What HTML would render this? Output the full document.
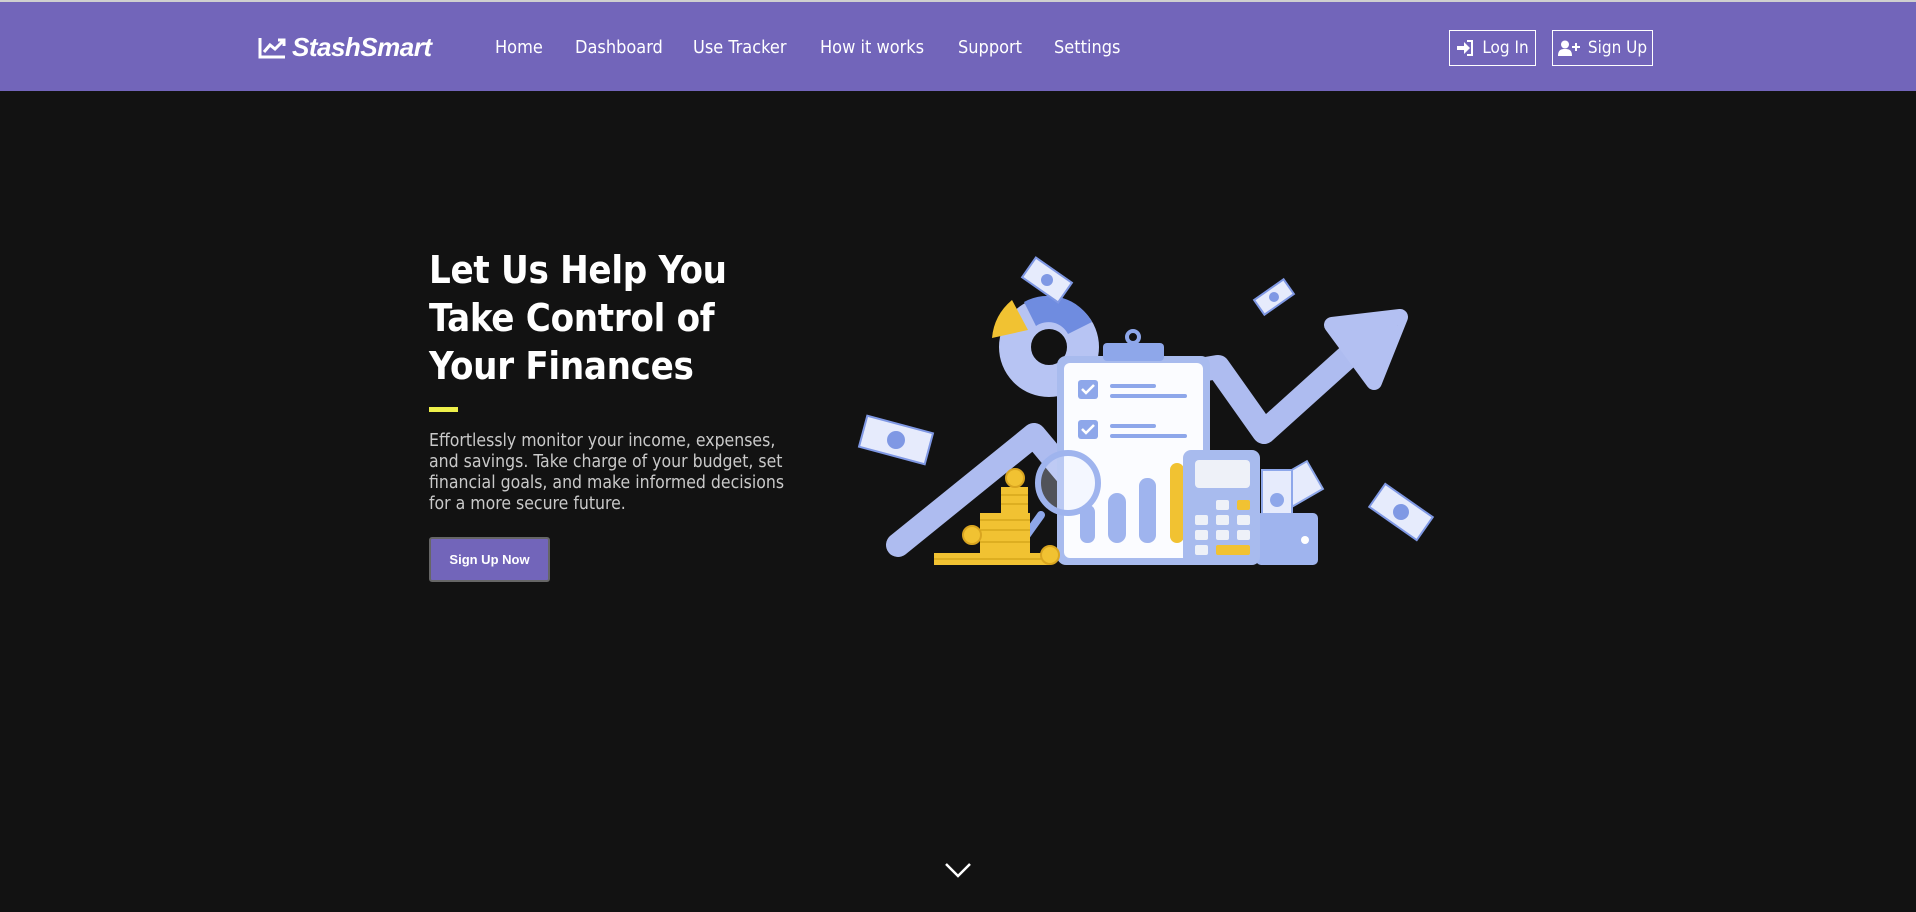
<!DOCTYPE html>
<html><head><meta charset="utf-8">
<style>
*{margin:0;padding:0;box-sizing:border-box}
body{width:1916px;height:912px;background:#121212;font-family:"DejaVu Sans Condensed","DejaVu Sans","Liberation Sans",sans-serif;overflow:hidden;position:relative;color:#fff}
.hdr{position:absolute;left:0;top:0;width:1916px;height:91px;background:#7265ba;border-top:2px solid #cfcfcf}
.logo{position:absolute;left:258px;top:30px;font:bold 26px "Liberation Sans",sans-serif;font-style:italic;letter-spacing:-0.5px;display:flex;align-items:center;gap:6px}
.nav{position:absolute;top:35px;font-size:18px;color:#fff}
.btn{position:absolute;top:28px;height:36px;border:1.5px solid #fff;font-size:17px;display:flex;align-items:center;justify-content:center;gap:8px}
h1{position:absolute;left:429px;top:246px;font-size:38px;line-height:48px;font-weight:bold;width:350px;letter-spacing:-0.3px}
.bar{position:absolute;left:429px;top:407px;width:29px;height:5px;background:#eef04a}
p{position:absolute;left:429px;top:431px;font-size:17.5px;line-height:21px;color:#c9c9c9;white-space:nowrap}
.cta{position:absolute;left:429px;top:537px;width:121px;height:45px;background:#7265ba;border:2px solid #666;border-radius:3px;font:bold 13px "Liberation Sans",sans-serif;display:flex;align-items:center;justify-content:center}
</style></head><body>
<div class="hdr">
<div class="logo"><svg width="28" height="24" viewBox="0 0 28 24"><path d="M2 2V21H27" stroke="#fff" stroke-width="3" fill="none"/><path d="M6 16L12 9L17 13L25 5" stroke="#fff" stroke-width="3" fill="none"/><path d="M20 4H26V10" stroke="#fff" stroke-width="3" fill="none"/></svg>StashSmart</div>
<span class="nav" style="left:495px">Home</span>
<span class="nav" style="left:575px">Dashboard</span>
<span class="nav" style="left:693px">Use Tracker</span>
<span class="nav" style="left:820px">How it works</span>
<span class="nav" style="left:958px">Support</span>
<span class="nav" style="left:1054px">Settings</span>
<div class="btn" style="left:1449px;width:87px"><svg width="18" height="16" viewBox="0 0 18 16"><path d="M1 6H8V2L14 8L8 14V10H1Z" fill="#fff"/><path d="M11 1H16V15H11" stroke="#fff" stroke-width="2" fill="none"/></svg>Log In</div>
<div class="btn" style="left:1552px;width:101px"><svg width="22" height="16" viewBox="0 0 22 16"><circle cx="7" cy="4.5" r="4" fill="#fff"/><path d="M0 16C0 10 3 9 7 9C11 9 14 10 14 16Z" fill="#fff"/><path d="M18 3V11M14 7H22" stroke="#fff" stroke-width="2"/></svg>Sign Up</div>
</div>
<h1>Let Us Help You Take Control of Your Finances</h1>
<div class="bar"></div>
<p>Effortlessly monitor your income, expenses,<br>and savings. Take charge of your budget, set<br>financial goals, and make informed decisions<br>for a more secure future.</p>
<div class="cta">Sign Up Now</div>

<svg style="position:absolute;left:0;top:0" width="1916" height="912" viewBox="0 0 1916 912">
<path d="M898 545L1034 435L1080 490" stroke="#aebcf0" stroke-width="24" stroke-linecap="round" stroke-linejoin="round" fill="none"/>
<path d="M1200 370L1218 367L1264 432L1355 350" stroke="#aebcf0" stroke-width="24" stroke-linecap="round" stroke-linejoin="round" fill="none"/>
<path d="M1332 325L1400 317L1374 382Z" fill="#b3c0f2" stroke="#b3c0f2" stroke-width="16" stroke-linejoin="round"/>
<circle cx="1049" cy="347" r="34" stroke="#b7c4f3" stroke-width="32" fill="none"/>
<path d="M1024 302A50 50 0 0 1 1092 322L1068 334A22 22 0 0 0 1036 326Z" fill="#6f8ce0"/>
<path d="M1012 300L1028 330L992 338Q994 315 1012 300Z" fill="#f1c232"/>
<rect x="1057" y="356" width="153" height="209" rx="9" fill="#a8bbee"/>
<rect x="1064" y="363" width="139" height="195" rx="6" fill="#fbfcff"/>
<rect x="1103" y="343" width="61" height="18" rx="4" fill="#8ea7ea"/>
<circle cx="1133" cy="337" r="6" fill="none" stroke="#8ea7ea" stroke-width="4"/>
<rect x="1078" y="380" width="20" height="19" rx="3" fill="#8ea7ea"/>
<path d="M1082 389L1086 393L1094 385" stroke="#fff" stroke-width="2.5" fill="none"/>
<rect x="1110" y="384" width="46" height="4" rx="2" fill="#8ea7ea"/><rect x="1110" y="394" width="77" height="4" rx="2" fill="#8ea7ea"/>
<rect x="1078" y="420" width="20" height="19" rx="3" fill="#8ea7ea"/>
<path d="M1082 429L1086 433L1094 425" stroke="#fff" stroke-width="2.5" fill="none"/>
<rect x="1110" y="424" width="46" height="4" rx="2" fill="#8ea7ea"/><rect x="1110" y="434" width="77" height="4" rx="2" fill="#8ea7ea"/>
<rect x="1080" y="505" width="15" height="38" rx="7" fill="#9fb4ee"/>
<rect x="1108" y="493" width="18" height="50" rx="9" fill="#9fb4ee"/>
<rect x="1139" y="478" width="17" height="65" rx="8" fill="#9fb4ee"/>
<rect x="1170" y="463" width="14" height="80" rx="7" fill="#f1c232"/>
<circle cx="1068" cy="483" r="30" fill="rgba(230,236,255,0.3)" stroke="#9fb4ee" stroke-width="6"/>
<path d="M1041 515L1009 560" stroke="#8ea7ea" stroke-width="8" stroke-linecap="round"/>
<g fill="#f1c232">
<rect x="934" y="553" width="115" height="12"/><rect x="980" y="513" width="50" height="40"/><rect x="1001" y="487" width="27" height="26"/>
</g>
<g stroke="#c99a10" stroke-width="1">
<path d="M934 559H1049M980 520H1030M980 530H1030M980 542H1030M1001 495H1028M1001 504H1028"/></g>
<circle cx="1015" cy="478" r="9" fill="#f1c232" stroke="#d9a520" stroke-width="2"/>
<circle cx="972" cy="535" r="9" fill="#f1c232" stroke="#d9a520" stroke-width="2"/>
<circle cx="1050" cy="555" r="9" fill="#f1c232" stroke="#d9a520" stroke-width="2"/>
<rect x="1275" y="470" width="45" height="32" fill="#e6ebfc" stroke="#8ea7ea" stroke-width="2" transform="rotate(-30 1297 490)"/>
<rect x="1262" y="470" width="30" height="45" fill="#e6ebfc" stroke="#8ea7ea" stroke-width="2"/>
<circle cx="1277" cy="500" r="7" fill="#8ea7ea"/>
<rect x="1256" y="513" width="62" height="52" rx="5" fill="#9fb4ee"/>
<circle cx="1305" cy="540" r="4" fill="#fff"/>
<rect x="1183" y="450" width="77" height="115" rx="8" fill="#a8bbee"/>
<rect x="1195" y="460" width="55" height="28" rx="4" fill="#eef1f8"/>
<g fill="#eef1f8"><rect x="1216" y="500" width="13" height="10" rx="2"/><rect x="1195" y="515" width="13" height="10" rx="2"/><rect x="1216" y="515" width="13" height="10" rx="2"/><rect x="1237" y="515" width="13" height="10" rx="2"/><rect x="1195" y="530" width="13" height="10" rx="2"/><rect x="1216" y="530" width="13" height="10" rx="2"/><rect x="1237" y="530" width="13" height="10" rx="2"/><rect x="1195" y="545" width="13" height="10" rx="2"/></g>
<rect x="1237" y="500" width="13" height="10" rx="2" fill="#f1c232"/>
<rect x="1216" y="545" width="34" height="10" rx="2" fill="#f1c232"/>
<g fill="#e6ebfc" stroke="#7f98e4" stroke-width="2">
<rect x="1025" y="268" width="44" height="24" transform="rotate(35 1047 280)"/>
<rect x="1256" y="288" width="36" height="18" transform="rotate(-35 1274 297)"/>
<rect x="862" y="424" width="68" height="32" transform="rotate(15 896 440)"/>
<rect x="1372" y="498" width="58" height="28" transform="rotate(35 1401 512)"/>
</g>
<g fill="#7f98e4"><circle cx="1047" cy="280" r="6"/><circle cx="1274" cy="297" r="5"/><circle cx="896" cy="440" r="9"/><circle cx="1401" cy="512" r="8"/></g>
<path d="M946 864L958 876L970 864" stroke="#fff" stroke-width="2.5" fill="none"/>
</svg>
</body></html>
